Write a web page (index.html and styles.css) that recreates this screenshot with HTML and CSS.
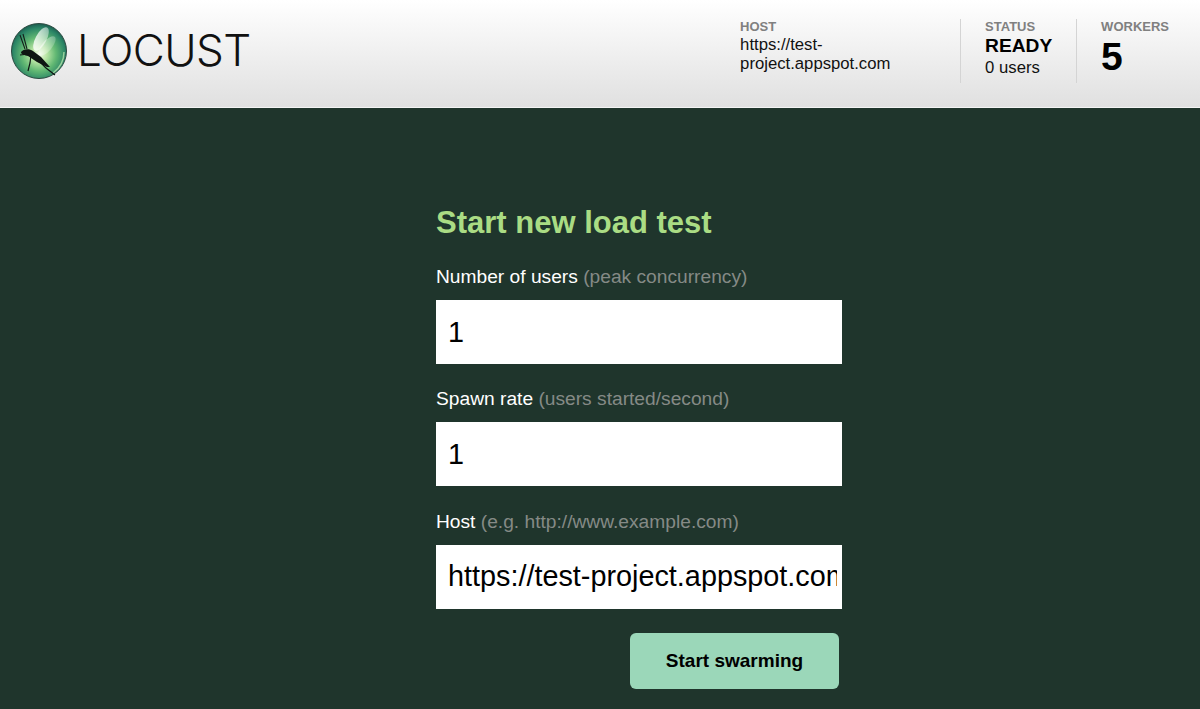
FILE: index.html
```html
<!DOCTYPE html>
<html lang="en">
<head>
<meta charset="utf-8">
<title>Locust</title>
<link rel="stylesheet" href="styles.css">
</head>
<body>
<header class="top">
  <div class="brand">
    <svg class="mark" viewBox="0 0 56 56" width="56" height="56" aria-hidden="true">
      <defs>
        <radialGradient id="orb" cx="0.5" cy="0.56" r="0.56">
          <stop offset="0" stop-color="#f2fbe9"/>
          <stop offset="0.25" stop-color="#b9e5a4"/>
          <stop offset="0.55" stop-color="#62b873"/>
          <stop offset="0.85" stop-color="#2b8666"/>
          <stop offset="1" stop-color="#1b5c50"/>
        </radialGradient>
        <linearGradient id="wing" x1="1" y1="0" x2="0" y2="1">
          <stop offset="0" stop-color="#fff" stop-opacity="0.35"/>
          <stop offset="1" stop-color="#fff" stop-opacity="0.9"/>
        </linearGradient>
      </defs>
      <circle cx="28" cy="28" r="27.5" fill="url(#orb)" stroke="#2c4a40" stroke-width="1"/>
      <path d="M42 50C49 45 53 37 53 29" stroke="#c3ecb2" stroke-opacity="0.7" stroke-width="1.5" fill="none"/>
      <ellipse cx="30" cy="16" rx="5.5" ry="13" transform="rotate(28 30 16)" fill="url(#wing)"/>
      <ellipse cx="36" cy="23" rx="5" ry="12" transform="rotate(40 36 23)" fill="url(#wing)" opacity="0.55"/>
      <path d="M9 12L14 26M12 11L16 26" stroke="#14201a" stroke-width="1.1" fill="none"/>
      <path d="M10 29C12 26 18 25 22 28L30 34L39 44L36 44L26 39L17 33C14 32 10 32 10 29Z" fill="#0e1512"/>
      <path d="M20 32L19 40L17 48M27 37L35 45L44 52M18 31L9 32" stroke="#0e1512" stroke-width="1.2" fill="none"/>
    </svg>
    <span class="wordmark">LOCUST</span>
  </div>
  <div class="stats">
    <div class="stat stat-host">
      <div class="stat-label">HOST</div>
      <div class="stat-text">https://test-project.appspot.com</div>
    </div>
    <div class="stat stat-status">
      <div class="stat-label">STATUS</div>
      <div class="stat-strong">READY</div>
      <div class="stat-text">0 users</div>
    </div>
    <div class="stat stat-workers">
      <div class="stat-label">WORKERS</div>
      <div class="stat-big">5</div>
    </div>
  </div>
</header>
<main class="content">
  <form class="panel">
    <h2 class="title">Start new load test</h2>
    <label class="field-label">Number of users <span class="hint">(peak concurrency)</span></label>
    <input class="field" type="text" value="1">
    <label class="field-label">Spawn rate <span class="hint">(users started/second)</span></label>
    <input class="field" type="text" value="1">
    <label class="field-label">Host <span class="hint">(e.g. http://www.example.com)</span></label>
    <input class="field" type="text" value="https://test-project.appspot.com">
    <div class="actions"><button class="go" type="button">Start swarming</button></div>
  </form>
</main>
</body>
</html>
```

FILE: styles.css
```css
html, body {
  margin: 0;
  height: 100%;
}
body {
  background: #1f352c;
  font-family: "Liberation Sans", Arial, sans-serif;
  color: #000;
  overflow: hidden;
}
.top {
  height: 108px;
  box-sizing: border-box;
  display: flex;
  justify-content: space-between;
  align-items: flex-start;
  background: linear-gradient(to bottom, #ffffff 0%, #e0e0e0 100%);
  border-bottom: 1px solid #f4f4f4;
}
.brand {
  display: flex;
  align-items: center;
  padding: 23px 0 0 11px;
  gap: 10px;
}
.mark {
  display: block;
}
.wordmark {
  font-family: "Inter", sans-serif;
  font-weight: 300;
  font-size: 44px;
  line-height: 54px;
  letter-spacing: -0.6px;
  color: #111;
  padding-bottom: 2px;
}
.stats {
  display: flex;
  padding-top: 19px;
  padding-right: 31px;
}
.stat {
  height: 64px;
  box-sizing: border-box;
}
.stat-host {
  width: 221px;
  padding-right: 60px;
  border-right: 1px solid #d4d4d4;
}
.stat-status {
  width: 116px;
  padding-left: 24px;
  border-right: 1px solid #d4d4d4;
}
.stat-workers {
  padding-left: 24px;
}
.stat-label {
  font-size: 13px;
  line-height: 16px;
  font-weight: bold;
  color: #808080;
}
.stat-text {
  font-size: 16.7px;
  line-height: 19px;
  color: #111;
}
.stat-strong {
  font-size: 19.2px;
  line-height: 22px;
  font-weight: bold;
  margin-bottom: 1px;
}
.stat-big {
  font-size: 39px;
  line-height: 44px;
  font-weight: bold;
}
.content {
  display: flex;
}
.panel {
  width: 406px;
  margin-left: 436px;
  padding-top: 96px;
}
.title {
  margin: 1px 0 25px;
  font-size: 31px;
  line-height: 36px;
  font-weight: bold;
  color: #aadc84;
}
.field-label {
  display: block;
  font-size: 19.2px;
  line-height: 22px;
  color: #fff;
  margin-bottom: 12px;
}
.hint {
  color: #858a86;
}
.field {
  display: block;
  width: 100%;
  height: 64px;
  box-sizing: border-box;
  border: 0;
  padding: 0 5px 0 12px;
  margin: 0 0 24.3px;
  background: #fff;
  font-family: "Liberation Sans", Arial, sans-serif;
  font-size: 28.8px;
  color: #000;
  outline: none;
  border-radius: 0;
}
.actions {
  display: flex;
  justify-content: flex-end;
  padding-right: 3px;
}
.go {
  width: 209px;
  height: 56px;
  border: 0;
  border-radius: 6px;
  background: #9bd7b9;
  font-family: "Liberation Sans", Arial, sans-serif;
  font-size: 19px;
  font-weight: bold;
  color: #000;
  padding: 0;
}
```
